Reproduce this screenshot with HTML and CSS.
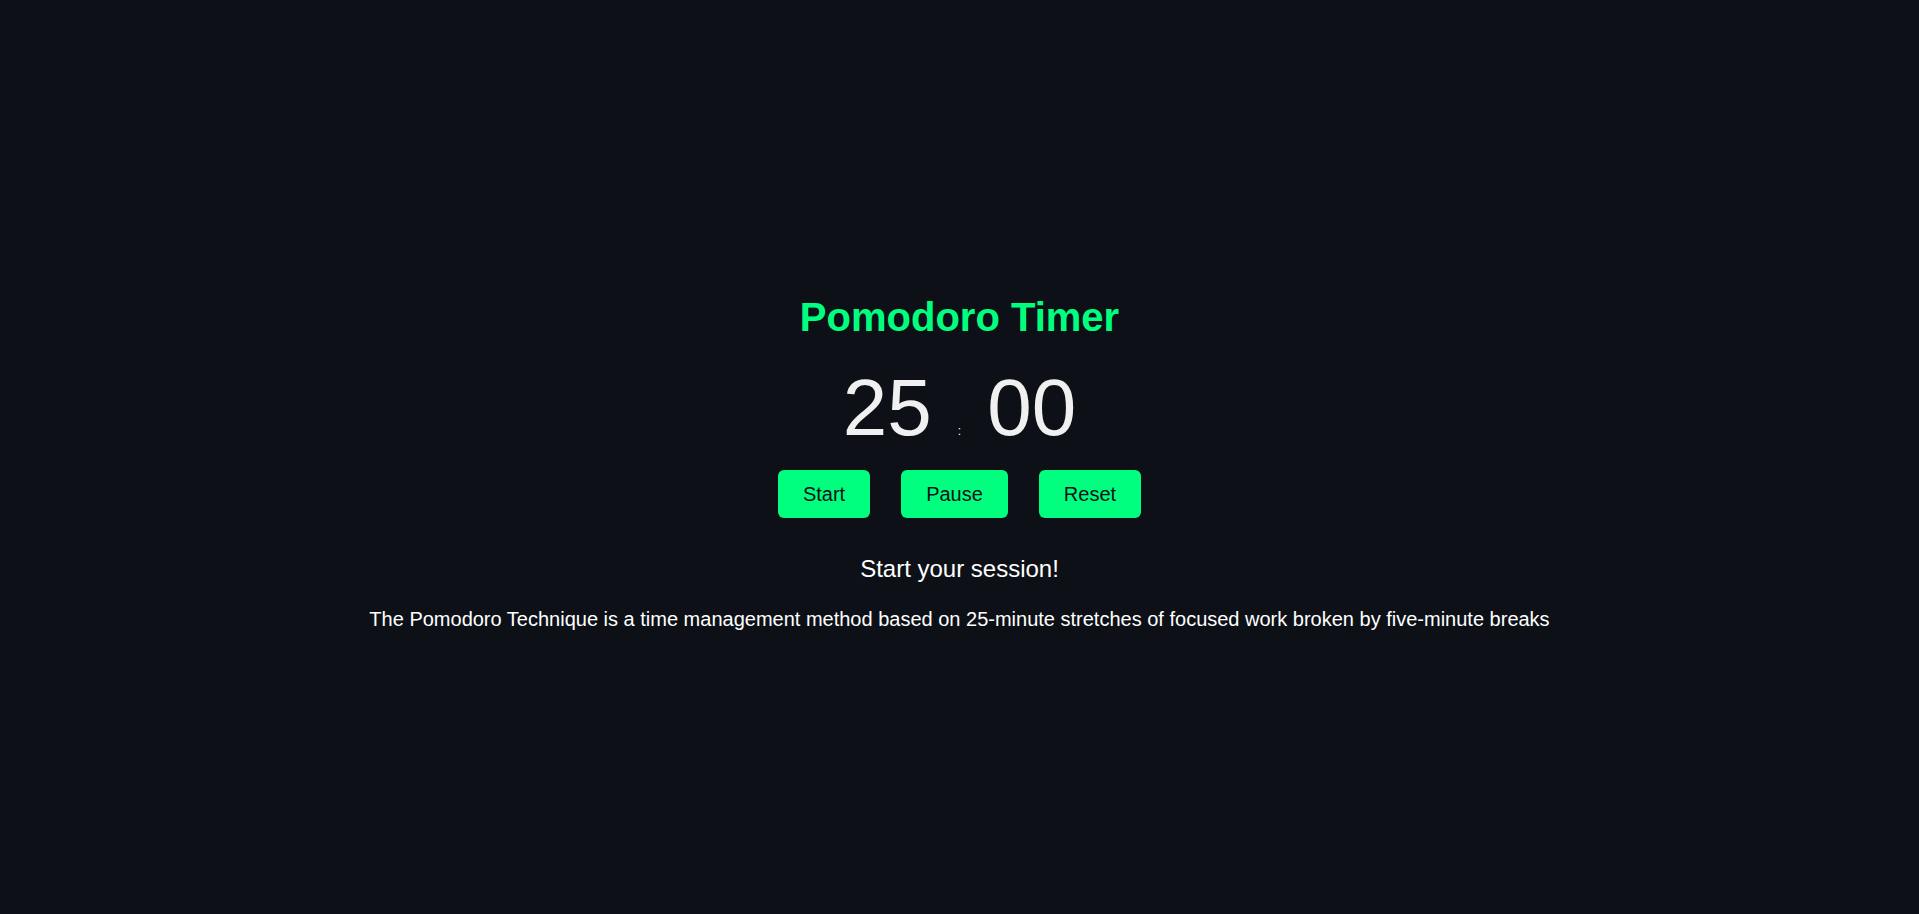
FILE: index.html
```html
<!DOCTYPE html>
<html lang="en">
<head>
<meta charset="utf-8">
<title>Pomodoro Timer</title>
<link rel="stylesheet" href="styles.css">
</head>
<body>
<main class="app">
  <h1 class="title">Pomodoro Timer</h1>
  <div class="timer">
    <span class="digits">25</span>
    <span class="colon">:</span>
    <span class="digits">00</span>
  </div>
  <div class="controls">
    <button class="btn">Start</button>
    <button class="btn">Pause</button>
    <button class="btn">Reset</button>
  </div>
  <p class="status">Start your session!</p>
  <p class="info">The Pomodoro Technique is a time management method based on 25-minute stretches of focused work broken by five-minute breaks</p>
</main>
</body>
</html>
```

FILE: styles.css
```css
html, body {
  margin: 0;
  padding: 0;
}
body {
  background: #0d1117;
  color: #ffffff;
  font-family: "Liberation Sans", Arial, sans-serif;
  height: 100vh;
}
.app {
  height: 100vh;
  box-sizing: border-box;
  padding-top: 10px;
  display: flex;
  flex-direction: column;
  align-items: center;
  justify-content: center;
  text-align: center;
}
.title {
  color: #00ff7f;
  font-size: 40px;
  font-weight: bold;
  margin: 0 0 22px;
  line-height: 46px;
}
.timer {
  display: flex;
  align-items: baseline;
  color: #f0f0f0;
  line-height: 92px;
  margin-bottom: -7px;
}
.digits {
  font-size: 80px;
}
.colon {
  font-size: 12px;
  margin: 0 26px;
  color: #ffffff;
}
.controls {
  display: flex;
  gap: 31px;
}
.btn {
  font-family: "Liberation Sans", Arial, sans-serif;
  font-size: 20px;
  line-height: 24px;
  padding: 12px 25px;
  background: #00ff7f;
  color: #0d1117;
  border: none;
  border-radius: 6px;
}
.status {
  font-size: 24px;
  margin: 37px 0 0;
  line-height: 28px;
}
.info {
  font-size: 20px;
  margin: 25px 0 0;
  line-height: 23px;
}
```
